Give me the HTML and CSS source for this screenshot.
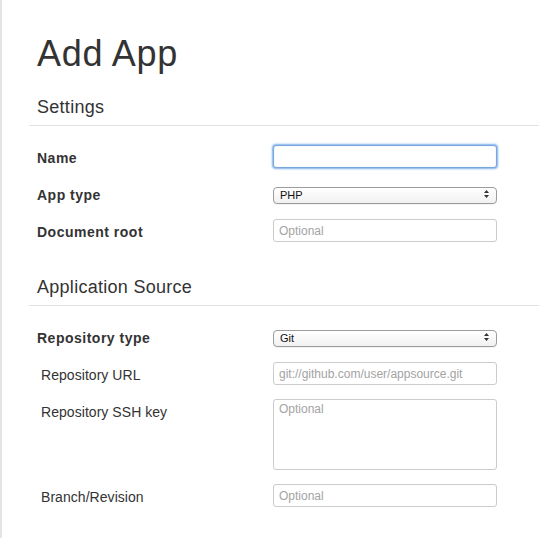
FILE: index.html
```html
<!DOCTYPE html>
<html>
<head>
<meta charset="utf-8">
<title>Add App</title>
<link rel="stylesheet" href="styles.css">
</head>
<body>
<div class="page">
  <h1 class="title">Add App</h1>

  <h2 class="section-title">Settings</h2>
  <div class="form">
    <div class="row">
      <label class="label strong">Name</label>
      <input class="input focused" type="text">
    </div>
    <div class="row">
      <label class="label strong">App type</label>
      <div class="select">
        <select><option>PHP</option></select>
        <svg class="arrows" width="5" height="8" viewBox="0 0 5 8"><path d="M2.5 0 L5 3 H0 Z M2.5 8 L5 5 H0 Z" fill="#333"/></svg>
      </div>
    </div>
    <div class="row">
      <label class="label strong">Document root</label>
      <input class="input" type="text" placeholder="Optional">
    </div>
  </div>

  <h2 class="section-title second">Application Source</h2>
  <div class="form">
    <div class="row">
      <label class="label strong">Repository type</label>
      <div class="select">
        <select><option>Git</option></select>
        <svg class="arrows" width="5" height="8" viewBox="0 0 5 8"><path d="M2.5 0 L5 3 H0 Z M2.5 8 L5 5 H0 Z" fill="#333"/></svg>
      </div>
    </div>
    <div class="row">
      <label class="label sub">Repository URL</label>
      <input class="input" type="text" placeholder="git://github.com/user/appsource.git">
    </div>
    <div class="row">
      <label class="label sub">Repository SSH key</label>
      <textarea class="textarea" placeholder="Optional"></textarea>
    </div>
    <div class="row">
      <label class="label sub">Branch/Revision</label>
      <input class="input" type="text" placeholder="Optional">
    </div>
  </div>
</div>
</body>
</html>
```

FILE: styles.css
```css
html, body {
  margin: 0;
  padding: 0;
  background: #fff;
}

body {
  font-family: "Liberation Sans", Arial, Helvetica, sans-serif;
  color: #333;
}

.page {
  border-left: 2px solid #e4e4e4;
  min-height: 100vh;
  box-sizing: border-box;
  padding: 34px 0 0 27px;
}

.title {
  margin: 0;
  padding-left: 8px;
  font-size: 36px;
  line-height: 40px;
  font-weight: normal;
  letter-spacing: 0.7px;
  color: #333;
}

.section-title {
  margin: 21px 0 0 0;
  padding: 0 0 6px 8px;
  font-size: 18px;
  line-height: 24px;
  font-weight: normal;
  letter-spacing: 0.28px;
  color: #333;
  border-bottom: 1px solid #e2e2e2;
}

.section-title.second {
  margin-top: 33px;
}

.form {
  display: flex;
  flex-direction: column;
  gap: 14px;
  padding: 19px 0 0 8px;
}

.row {
  display: flex;
  align-items: flex-start;
}

.label {
  width: 236px;
  flex: none;
  box-sizing: border-box;
  padding-top: 3px;
  font-size: 14px;
  line-height: 20px;
  color: #333;
}

.label.strong {
  font-weight: bold;
  letter-spacing: 0.5px;
}

.label.sub {
  padding-left: 4px;
  letter-spacing: 0.05px;
}

.input,
.textarea {
  width: 224px;
  height: 23px;
  box-sizing: border-box;
  margin: 0;
  padding: 0 5px;
  border: 1px solid #cbcbcb;
  border-radius: 3px;
  font-family: "Liberation Sans", Arial, Helvetica, sans-serif;
  font-size: 12px;
  color: #333;
  background: #fff;
  outline: none;
}

.input::placeholder,
.textarea::placeholder {
  color: #a3a3a3;
  opacity: 1;
}

.input.focused {
  border-color: #79a7dc;
  box-shadow: 0 0 2px 1px rgba(82, 150, 230, 0.75), inset 0 0 1px rgba(82, 150, 230, 0.5);
}

.textarea {
  height: 71px;
  padding: 2px 5px;
  line-height: 14px;
  resize: none;
  display: block;
}

.select {
  position: relative;
  width: 224px;
  height: 17px;
  margin-top: 3px;
}

.select select {
  -webkit-appearance: none;
  appearance: none;
  width: 100%;
  height: 17px;
  box-sizing: border-box;
  margin: 0;
  padding: 0 0 0 6px;
  border: 1px solid #9c9c9c;
  border-radius: 4px;
  background: linear-gradient(#ffffff, #f1f1f1);
  box-shadow: 0 1px 0 rgba(0, 0, 0, 0.05);
  font-family: "Liberation Sans", Arial, Helvetica, sans-serif;
  font-size: 11px;
  line-height: 15px;
  color: #111;
  outline: none;
}

.arrows {
  position: absolute;
  right: 8px;
  top: 4.5px;
  pointer-events: none;
}
```
